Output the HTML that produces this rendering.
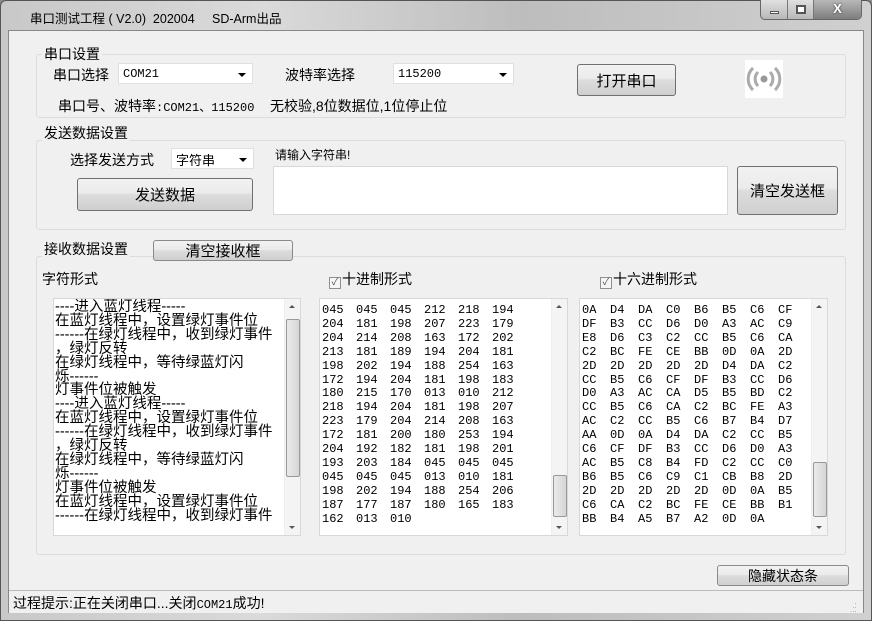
<!DOCTYPE html>
<html><head><meta charset="utf-8"><style>
*{margin:0;padding:0;box-sizing:border-box}
body{width:872px;height:621px;overflow:hidden;background:#8a8a8a;font-family:"Liberation Sans","Noto Sans CJK SC",sans-serif;font-size:13px;color:#000;position:relative}
.a{position:absolute}
#frame{left:0;top:0;width:872px;height:621px;border-radius:6px 6px 0 0;background:linear-gradient(90deg,#c8c8c8,#dadada 30%,#bdbdbd 60%,#d0d0d0);border:1px solid #555}
#client{left:8px;top:30px;width:856px;height:583px;background:#f0f0f0;border:1px solid #888}
.grp{border:1px solid #dcdcdc;border-radius:3px;background:#f0f0f0}
.lbl{font-size:14px;background:#f0f0f0;padding:0 2px;white-space:nowrap}
.combo{background:#fff;border:1px solid #e0e0e0;font-family:"Liberation Mono","Noto Sans CJK SC",monospace;font-size:12px;padding:3px 4px}
.combo:after{content:"";position:absolute;right:6px;top:9px;border:4px solid transparent;border-top:4px solid #000;border-bottom:0}
.btn{border:1px solid #707070;border-radius:3px;background:linear-gradient(#f2f2f2,#ebebeb 45%,#dddddd 50%,#cfcfcf);font-size:15px;display:flex;align-items:center;justify-content:center}
.box{background:#fff;border:1px solid #d8d8d8}
.txt{font-family:"Liberation Sans","Noto Sans CJK SC",sans-serif;font-size:14.5px;line-height:13.9px;white-space:pre;letter-spacing:0}
.mono{font-family:"Liberation Mono",monospace;font-size:12px;line-height:13.9px;white-space:pre}
.sb{width:16px;background:#f4f4f4;border-left:1px solid #eee}
.thumb{left:1px;width:14px;border:1px solid #999;border-radius:2px;background:linear-gradient(90deg,#eaeaea,#d6d6d6)}
.cb{display:inline-block;width:12px;height:12px;border:1px solid #8f8f8f;background:#f6f6f6;font-size:10px;line-height:10px;text-align:center;vertical-align:-1px;margin-right:1px;color:#555}
</style></head><body>
<div id="frame" class="a"></div>
<div class="a" style="left:30px;top:8px;font-size:12.5px">串口测试工程 ( V2.0)&nbsp; 202004&nbsp;&nbsp;&nbsp;&nbsp; SD-Arm出品</div>
<div class="a" style="left:760px;top:0;width:102px;height:20px;border:1px solid #666;border-top:0;border-radius:0 0 5px 5px;background:linear-gradient(#e0e0e0,#b8b8b8);display:flex">
 <div style="width:27px;border-right:1px solid #777;position:relative"><div class="a" style="left:9px;top:11px;width:9px;height:3px;background:#fff;border:1px solid #555"></div></div>
 <div style="width:26px;border-right:1px solid #777;position:relative"><div class="a" style="left:8px;top:5px;width:10px;height:9px;border:2px solid #555;background:#fff"></div></div>
 <div style="flex:1;text-align:center;font-weight:bold;color:#fff;font-size:13px;line-height:18px;text-shadow:0 0 2px #333;background:linear-gradient(#b8b8b8,#7d7d7d);border-radius:0 0 4px 0">X</div>
</div>
<div id="client" class="a"></div>

<div class="a grp" style="left:36px;top:54px;width:810px;height:64px"></div>
<div class="a lbl" style="left:42px;top:44px">串口设置</div>
<div class="a" style="left:53px;top:65px;font-size:14px">串口选择</div>
<div class="a combo" style="left:118px;top:63px;width:135px;height:21px">COM21</div>
<div class="a" style="left:285px;top:65px;font-size:14px">波特率选择</div>
<div class="a combo" style="left:393px;top:63px;width:121px;height:21px">115200</div>
<div class="a btn" style="left:577px;top:64px;width:99px;height:32px">打开串口</div>
<div class="a" style="left:745px;top:60px;width:38px;height:38px;background:#fff">
<svg width="38" height="38" viewBox="0 0 38 38"><circle cx="19" cy="19" r="3.5" fill="#999"/><path d="M13 12a10 10 0 0 0 0 14M25 12a10 10 0 0 1 0 14" stroke="#aaa" stroke-width="3" fill="none"/><path d="M8 8a15 15 0 0 0 0 22M30 8a15 15 0 0 1 0 22" stroke="#aaa" stroke-width="3" fill="none"/></svg></div>
<div class="a" style="left:58px;top:96px;font-size:14px;white-space:nowrap">串口号、波特率<span style="font-family:'Liberation Mono',monospace;font-size:12px">:COM21、115200</span>&nbsp;&nbsp;&nbsp; 无校验,8位数据位,1位停止位</div>

<div class="a grp" style="left:36px;top:140px;width:810px;height:90px"></div>
<div class="a lbl" style="left:42px;top:123px">发送数据设置</div>
<div class="a" style="left:70px;top:150px;font-size:14px">选择发送方式</div>
<div class="a combo" style="left:171px;top:148px;width:83px;height:21px;font-family:'Liberation Sans','Noto Sans CJK SC',sans-serif;font-size:13px;padding:1px 4px">字符串</div>
<div class="a btn" style="left:77px;top:178px;width:176px;height:33px">发送数据</div>
<div class="a" style="left:275px;top:146px;font-size:12px">请输入字符串!</div>
<div class="a box" style="left:273px;top:166px;width:455px;height:49px"></div>
<div class="a btn" style="left:737px;top:166px;width:101px;height:49px">清空发送框</div>

<div class="a grp" style="left:36px;top:256px;width:810px;height:299px"></div>
<div class="a lbl" style="left:42px;top:239px">接收数据设置</div>
<div class="a btn" style="left:153px;top:240px;width:140px;height:21px;border-color:#8a8a8a">清空接收框</div>
<div class="a" style="left:42px;top:269px;font-size:14px">字符形式</div>
<div class="a" style="left:329px;top:269px;font-size:14px"><span class="cb">✓</span>十进制形式</div>
<div class="a" style="left:600px;top:269px;font-size:14px"><span class="cb">✓</span>十六进制形式</div>

<div class="a box" style="left:53px;top:298px;width:248px;height:238px;overflow:hidden">
<div class="a txt" style="left:1px;top:2px">----进入蓝灯线程-----
在蓝灯线程中，设置绿灯事件位
------在绿灯线程中，收到绿灯事件
，绿灯反转
在绿灯线程中，等待绿蓝灯闪
烁------
灯事件位被触发
----进入蓝灯线程-----
在蓝灯线程中，设置绿灯事件位
------在绿灯线程中，收到绿灯事件
，绿灯反转
在绿灯线程中，等待绿蓝灯闪
烁------
灯事件位被触发
在蓝灯线程中，设置绿灯事件位
------在绿灯线程中，收到绿灯事件</div>
<div class="a sb" style="right:0;top:0;height:236px"><div class="a" style="left:4px;top:6px;border:3px solid transparent;border-bottom:3px solid #555;border-top:0"></div><div class="a thumb" style="top:20px;height:158px"></div><div class="a" style="left:4px;bottom:6px;border:3px solid transparent;border-top:3px solid #555;border-bottom:0"></div></div>
</div>

<div class="a box" style="left:319px;top:298px;width:249px;height:238px;overflow:hidden">
<div class="a mono" style="left:2px;top:5px;tab-size:34px">045	045	045	212	218	194
204	181	198	207	223	179
204	214	208	163	172	202
213	181	189	194	204	181
198	202	194	188	254	163
172	194	204	181	198	183
180	215	170	013	010	212
218	194	204	181	198	207
223	179	204	214	208	163
172	181	200	180	253	194
204	192	182	181	198	201
193	203	184	045	045	045
045	045	045	013	010	181
198	202	194	188	254	206
187	177	187	180	165	183
162	013	010</div>
<div class="a sb" style="right:0;top:0;height:236px"><div class="a" style="left:4px;top:6px;border:3px solid transparent;border-bottom:3px solid #555;border-top:0"></div><div class="a thumb" style="top:176px;height:42px"></div><div class="a" style="left:4px;bottom:6px;border:3px solid transparent;border-top:3px solid #555;border-bottom:0"></div></div>
</div>

<div class="a box" style="left:579px;top:298px;width:249px;height:238px;overflow:hidden">
<div class="a mono" style="left:2px;top:5px;tab-size:28px">0A	D4	DA	C0	B6	B5	C6	CF
DF	B3	CC	D6	D0	A3	AC	C9
E8	D6	C3	C2	CC	B5	C6	CA
C2	BC	FE	CE	BB	0D	0A	2D
2D	2D	2D	2D	2D	D4	DA	C2
CC	B5	C6	CF	DF	B3	CC	D6
D0	A3	AC	CA	D5	B5	BD	C2
CC	B5	C6	CA	C2	BC	FE	A3
AC	C2	CC	B5	C6	B7	B4	D7
AA	0D	0A	D4	DA	C2	CC	B5
C6	CF	DF	B3	CC	D6	D0	A3
AC	B5	C8	B4	FD	C2	CC	C0
B6	B5	C6	C9	C1	CB	B8	2D
2D	2D	2D	2D	2D	0D	0A	B5
C6	CA	C2	BC	FE	CE	BB	B1
BB	B4	A5	B7	A2	0D	0A</div>
<div class="a sb" style="right:0;top:0;height:236px"><div class="a" style="left:4px;top:6px;border:3px solid transparent;border-bottom:3px solid #555;border-top:0"></div><div class="a thumb" style="top:163px;height:55px"></div><div class="a" style="left:4px;bottom:6px;border:3px solid transparent;border-top:3px solid #555;border-bottom:0"></div></div>
</div>

<div class="a btn" style="left:717px;top:565px;width:132px;height:21px;border-color:#8a8a8a;font-size:14px">隐藏状态条</div>
<div class="a" style="left:9px;top:590px;width:854px;height:23px;border-top:1px solid #bbb;background:#f0f0f0"></div>
<div class="a" style="left:13px;top:593px;font-size:14px;white-space:nowrap">过程提示:正在关闭串口...关闭<span style="font-family:'Liberation Mono',monospace;font-size:12px">COM21</span>成功!</div>
<div class="a" style="left:850px;top:600px;color:#999;font-size:8px;line-height:4px">&nbsp;&nbsp;.<br>&nbsp;..<br>...</div>
</body></html>
